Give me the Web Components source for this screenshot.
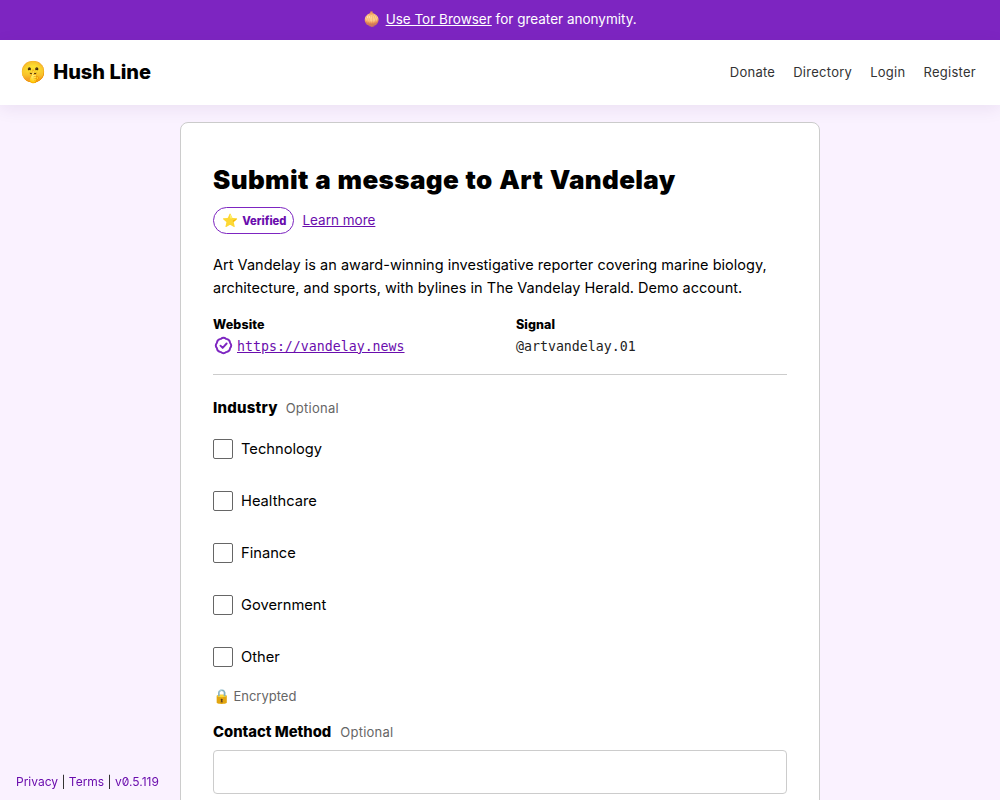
<!DOCTYPE html>
<html lang="en">
<head>
<meta charset="utf-8">
<title>Hush Line</title>
<style>
  html, body { margin: 0; padding: 0; }
  body {
    background: #faf2ff;
    color: #000;
    font-family: Inter, "Noto Sans", sans-serif;
    font-size: 16px;
  }
</style>
</head>
<body>
<tor-banner>
  <a href="#">Use Tor Browser</a> for greater anonymity.
</tor-banner>
<site-header></site-header>
<message-card>
  <h1 slot="title">Submit a message to Art Vandelay</h1>
  <verified-badge slot="badge"></verified-badge>
  <span slot="bio">Art Vandelay is an award-winning investigative reporter covering marine biology, architecture, and sports, with bylines in The Vandelay Herald. Demo account.</span>
  <info-item slot="info" label="Website" href="https://vandelay.news" verified></info-item>
  <info-item slot="info" label="Signal" value="@artvandelay.01"></info-item>
  <check-group label="Industry" options="Technology,Healthcare,Finance,Government,Other"></check-group>
  <text-field label="Contact Method"></text-field>
</message-card>
<site-footer></site-footer>

<script>
const emojiFont = '"Noto Color Emoji"';

class TorBanner extends HTMLElement {
  constructor() {
    super();
    this.attachShadow({ mode: "open" });
    this.shadowRoot.innerHTML = `
    <style>
      :host {
        display: flex;
        justify-content: center;
        align-items: center;
        box-sizing: border-box;
        height: 40px;
        padding-bottom: 3px;
        background: #7d25c1;
        color: #fff;
        font-size: 13.5px;
      }
      .emoji { font-family: ${emojiFont}; font-size: 14px; margin-right: 1px; }
      ::slotted(a) { color: #fff; }
    </style>
    <div><span class="emoji">🧅</span> <slot></slot></div>
    `;
  }
}

class SiteHeader extends HTMLElement {
  constructor() {
    super();
    this.attachShadow({ mode: "open" });
    this.shadowRoot.innerHTML = `
    <style>
      :host {
        display: flex;
        justify-content: space-between;
        align-items: center;
        box-sizing: border-box;
        height: 65px;
        padding: 0 24px 2px 20px;
        background: #fff;
        box-shadow: 0 4px 16px rgba(60, 20, 100, 0.08);
        position: relative;
      }
      .logo {
        display: flex;
        align-items: center;
        gap: 7px;
        font-size: 20px;
        font-weight: 800;
        color: #000;
        text-decoration: none;
      }
      .emoji { font-family: ${emojiFont}; font-weight: 400; font-size: 21px; }
      nav { display: flex; gap: 18px; }
      nav a { color: #333; font-size: 13px; text-decoration: none; letter-spacing: 0.27px; }
    </style>
    <a class="logo" href="#"><span class="emoji">🤫</span>Hush Line</a>
    <nav>
      <a href="#">Donate</a>
      <a href="#">Directory</a>
      <a href="#">Login</a>
      <a href="#">Register</a>
    </nav>
    `;
  }
}

class VerifiedBadge extends HTMLElement {
  constructor() {
    super();
    this.attachShadow({ mode: "open" });
    this.shadowRoot.innerHTML = `
    <style>
      :host { display: flex; align-items: center; gap: 8px; }
      .pill {
        display: flex;
        align-items: center;
        gap: 4px;
        height: 25px;
        padding: 0 7px 0 8px;
        border: 1px solid #7d25c1;
        border-radius: 14px;
        color: #6a0dad;
        font-size: 11.2px;
        font-weight: 800;
      }
      .emoji { font-family: ${emojiFont}; font-weight: 400; font-size: 13px; }
      a { color: #6a0dad; font-size: 13.5px; position: relative; top: -1px; }
    </style>
    <span class="pill"><span class="emoji">⭐</span>Verified</span>
    <a href="#">Learn more</a>
    `;
  }
}

class InfoItem extends HTMLElement {
  connectedCallback() {
    const root = this.shadowRoot || this.attachShadow({ mode: "open" });
    const href = this.getAttribute("href");
    const tick = `
      <svg viewBox="0 0 20 20" width="19" height="19" fill="none" stroke="#7d25c1" stroke-width="2" stroke-linecap="round" stroke-linejoin="round">
        <path d="M12.87 3.07Q16.58 3.42 16.93 7.13Q19.3 10 16.93 12.87Q16.58 16.58 12.87 16.93Q10 19.3 7.13 16.93Q3.42 16.58 3.07 12.87Q.7 10 3.07 7.13Q3.42 3.42 7.13 3.07Q10 .7 12.87 3.07Z"/>
        <path d="M6.8 10.2l2.3 2.3 4.2-4.6"/>
      </svg>`;
    const value = href
      ? `${this.hasAttribute("verified") ? tick : ""}<a href="#">${href}</a>`
      : `<span>${this.getAttribute("value")}</span>`;
    root.innerHTML = `
    <style>
      :host { display: block; }
      .label { font-size: 12.5px; font-weight: 800; line-height: 16px; margin-top: 1px; letter-spacing: 0.1px; }
      .value {
        display: flex;
        align-items: center;
        gap: 4px;
        height: 22px;
        margin-top: 2px;
        font-family: "DejaVu Sans Mono", "Liberation Mono", monospace;
        font-size: 13.25px;
        color: #222;
      }
      svg { margin-left: 1px; position: relative; top: -1px; }
      a { color: #6a0dad; }
    </style>
    <div class="label">${this.getAttribute("label")}</div>
    <div class="value">${value}</div>
    `;
  }
}

class CheckGroup extends HTMLElement {
  connectedCallback() {
    const root = this.shadowRoot || this.attachShadow({ mode: "open" });
    const rows = this.getAttribute("options").split(",").map((name) => `
      <label class="row"><span class="box"></span>${name}</label>`).join("");
    root.innerHTML = `
    <style>
      :host { display: block; }
      .head { display: flex; align-items: baseline; gap: 8px; height: 20px; margin-top: 1px; }
      .name { font-size: 15px; font-weight: 800; letter-spacing: 0.2px; }
      .opt { font-size: 13px; color: #666; letter-spacing: 0.25px; }
      .rows { display: flex; flex-direction: column; gap: 32px; margin-top: 21px; }
      .row { display: flex; align-items: center; gap: 8px; height: 20px; font-size: 14.7px; }
      .box {
        width: 18px;
        height: 18px;
        background: #fff;
        border: 1px solid #666;
        border-radius: 2px;
      }
      .enc {
        display: flex;
        align-items: center;
        gap: 3px;
        margin-top: 19px;
        height: 20px;
        font-size: 13px;
        color: #666;
      }
      .emoji { font-family: ${emojiFont}; font-size: 14px; }
    </style>
    <div class="head"><span class="name">${this.getAttribute("label")}</span><span class="opt">Optional</span></div>
    <div class="rows">${rows}</div>
    <div class="enc"><span class="emoji">🔒</span>Encrypted</div>
    `;
  }
}

class TextField extends HTMLElement {
  connectedCallback() {
    const root = this.shadowRoot || this.attachShadow({ mode: "open" });
    root.innerHTML = `
    <style>
      :host { display: block; margin-top: 17px; }
      .head { display: flex; align-items: baseline; gap: 9px; height: 20px; }
      .name { font-size: 14.8px; font-weight: 800; }
      .opt { font-size: 13px; color: #666; letter-spacing: 0.25px; }
      input {
        display: block;
        box-sizing: border-box;
        width: 100%;
        height: 44px;
        margin-top: 7px;
        padding: 0 12px;
        background: #fff;
        border: 1px solid #ccc;
        border-radius: 4px;
        font: inherit;
      }
    </style>
    <div class="head"><span class="name">${this.getAttribute("label")}</span><span class="opt">Optional</span></div>
    <input type="text">
    `;
  }
}

class MessageCard extends HTMLElement {
  constructor() {
    super();
    this.attachShadow({ mode: "open" });
    this.shadowRoot.innerHTML = `
    <style>
      :host {
        display: block;
        box-sizing: border-box;
        width: 640px;
        margin: 17px auto 0;
        padding: 32px 32px 48px;
        background: #fff;
        border: 1px solid #ccc;
        border-radius: 8px;
      }
      ::slotted(h1) {
        margin: 0;
        height: 50px;
        font-size: 26px;
        line-height: 50px;
        font-weight: 900;
        letter-spacing: 0.35px;
        word-spacing: 1px;
      }
      .badge { margin-top: 2px; }
      .bio { margin: 19px 0 0; font-size: 14.5px; line-height: 23px; letter-spacing: 0.02px; }
      .info {
        display: grid;
        grid-template-columns: 303px 1fr;
        margin-top: 17px;
        padding-bottom: 17px;
        border-bottom: 1px solid #ccc;
        margin-bottom: 23px;
      }
    </style>
    <slot name="title"></slot>
    <div class="badge"><slot name="badge"></slot></div>
    <p class="bio"><slot name="bio"></slot></p>
    <div class="info"><slot name="info"></slot></div>
    <slot></slot>
    `;
  }
}

class SiteFooter extends HTMLElement {
  constructor() {
    super();
    this.attachShadow({ mode: "open" });
    this.shadowRoot.innerHTML = `
    <style>
      :host {
        position: fixed;
        left: 16px;
        bottom: 11px;
        font-size: 12px;
        color: #222;
        font-feature-settings: "zero";
      }
      a { color: #6a0dad; text-decoration: none; }
    </style>
    <a href="#">Privacy</a> | <a href="#">Terms</a> | <a href="#">v0.5.119</a>
    `;
  }
}

customElements.define("tor-banner", TorBanner);
customElements.define("site-header", SiteHeader);
customElements.define("verified-badge", VerifiedBadge);
customElements.define("info-item", InfoItem);
customElements.define("check-group", CheckGroup);
customElements.define("text-field", TextField);
customElements.define("message-card", MessageCard);
customElements.define("site-footer", SiteFooter);
</script>
</body>
</html>
